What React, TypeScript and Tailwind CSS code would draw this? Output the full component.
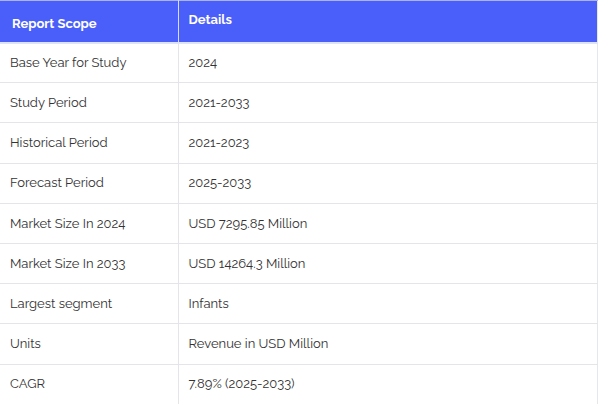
const rows: [string, string][] = [
  ["Base Year for Study", "2024"],
  ["Study Period", "2021-2033"],
  ["Historical Period", "2021-2023"],
  ["Forecast Period", "2025-2033"],
  ["Market Size In 2024", "USD 7295.85 Million"],
  ["Market Size In 2033", "USD 14264.3 Million"],
  ["Largest segment", "Infants"],
  ["Units", "Revenue in USD Million"],
  ["CAGR", "7.89% (2025-2033)"],
];

export default function App() {
  return (
    <div className="h-[404px] w-[600px] overflow-hidden bg-white font-['Raleway','Lato',sans-serif]">
      <table className="w-[598px] border-collapse border-r border-[#e5e7eb] text-[13px] text-[#333]">
        <thead>
          <tr className="h-[42px] border-t border-[#aab3f5] border-b-2 border-b-[#dde3fb] bg-[#4a5ef9] text-left text-white">
            <th className="w-[178px] border-r border-[#d7dcf6] px-3 pt-[5px] font-bold">
              Report Scope
            </th>
            <th className="px-[10px] pb-[3px] font-bold">Details</th>
          </tr>
        </thead>
        <tbody>
          {rows.map(([k, v]) => (
            <tr key={k} className="h-[40.2px] border-b border-[#e3e5e9]">
              <td className="border-r border-[#e3e5e9] px-[10px]">{k}</td>
              <td className="px-[10px]">{v}</td>
            </tr>
          ))}
        </tbody>
      </table>
    </div>
  );
}
